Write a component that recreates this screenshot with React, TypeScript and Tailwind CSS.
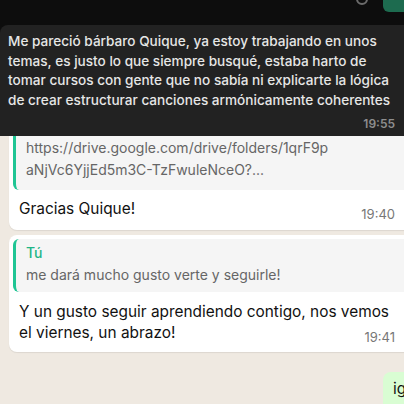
import React from 'react';

const font = { fontFamily: 'Inter, "Noto Sans", sans-serif' };

const App: React.FC = () => {
  return (
    <div className="w-[404px] h-[404px] overflow-hidden flex flex-col bg-[#efe9e1]" style={font}>
      {/* dark part */}
      <div className="h-[136px] shrink-0 bg-[#0d0d0d] flex flex-col overflow-hidden">
        <div className="h-[25px] shrink-0 flex justify-end items-start gap-[15px]">
          <div className="w-[12px] h-[12px] -mt-[7px] rounded-full border-2 border-[#6b6b6b]" />
          <div className="w-[21px] h-[12px] rounded-bl-md bg-[#1d6b4f]" />
        </div>
        <div className="flex-1 bg-[#222222] rounded-tl-lg -mr-3 pl-2 pr-[14px] pt-[7px]">
          <p className="text-[13.6px] leading-[19.5px] font-medium text-[#e6e6e6]">
            Me pareció bárbaro Quique, ya estoy trabajando en unos temas, es justo lo que siempre busqué, estaba harto de tomar cursos con gente que no sabía ni explicarte la lógica de crear estructurar canciones armónicamente coherentes
          </p>
          <div className="flex justify-end pr-[7px] mt-[5px]">
            <span className="text-[12px] font-semibold text-[#8e8e8e]">19:55</span>
          </div>
        </div>
      </div>

      {/* light part */}
      <div className="flex-1 flex flex-col pl-[9px]">
        <div className="bg-white rounded-b-lg -mr-3 pl-1 pr-[8px] pb-[5px] shadow-[0_1px_1px_rgba(0,0,0,0.08)]">
          <div className="bg-[#f5f5f5] rounded-bl-md border-l-[3px] border-[#1fc594] -mr-4 pl-[10px] pt-[1px] pb-[9px]">
            <p className="text-[14px] leading-[22px] text-[#666666]">
              https://drive.google.com/drive/folders/1qrF9p
              <br />
              aNjVc6YjjEd5m3C-TzFwuleNceO?...
            </p>
          </div>
          <div className="flex items-start justify-between pl-[6px] pr-[13px] pt-[8px]">
            <span className="text-[15.4px] leading-[22px] text-[#111111]">Gracias Quique!</span>
            <span className="text-[13px] text-[#777777] mt-[7px]">19:40</span>
          </div>
        </div>

        <div className="mt-[5px] bg-white rounded-lg -mr-3 pl-1 pr-[8px] pt-1 pb-[5px] shadow-[0_1px_1px_rgba(0,0,0,0.08)]">
          <div className="bg-[#f5f5f5] rounded-l-md border-l-[3px] border-[#1fc594] -mr-4 pl-[10px] pt-[3px] pb-[6px]">
            <p className="text-[14px] leading-[22px] font-medium text-[#1fb587]">Tú</p>
            <p className="text-[14px] leading-[22px] text-[#666666]">me dará mucho gusto verte y seguirle!</p>
          </div>
          <div className="pl-[6px] pt-[9px]">
            <p className="text-[15.4px] leading-[21px] text-[#111111]">
              Y un gusto seguir aprendiendo contigo, nos vemos
            </p>
            <div className="flex items-start justify-between pr-[13px]">
              <span className="text-[15.4px] leading-[21px] text-[#111111]">el viernes, un abrazo!</span>
              <span className="text-[13px] text-[#777777] mt-[6px]">19:41</span>
            </div>
          </div>
        </div>

        <div className="flex justify-end mt-[20px] -mr-3">
          <div className="bg-[#d9fdd3] rounded-tl-lg h-[40px] w-[33px] pl-[10px] pt-[4px]">
            <span className="text-[15.4px] text-[#111111]">ig</span>
          </div>
        </div>
      </div>
    </div>
  );
};

export default App;
